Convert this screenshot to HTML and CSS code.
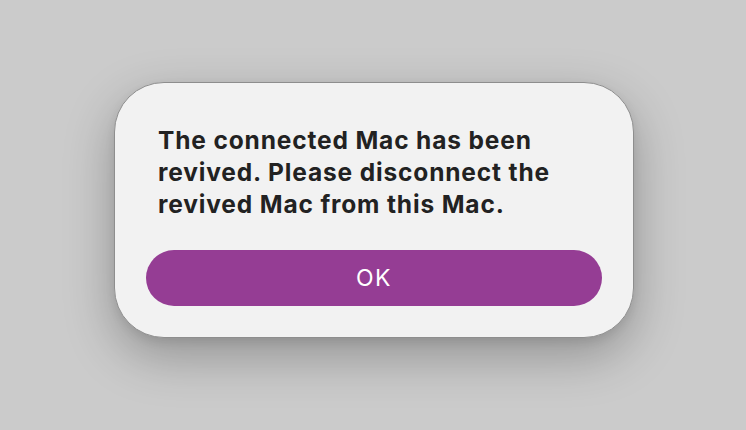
FILE: index.html
```html
<!DOCTYPE html>
<html>
<head>
<meta charset="utf-8">
<link rel="stylesheet" href="styles.css">
</head>
<body>
<div class="stage">
  <div class="dialog">
    <p class="message">The connected Mac has been revived. Please disconnect the revived Mac from this Mac.</p>
    <button class="ok">OK</button>
  </div>
</div>
</body>
</html>
```
FILE: styles.css
```css
html, body {
  margin: 0;
  padding: 0;
  width: 746px;
  height: 430px;
  background: #cbcbcb;
  overflow: hidden;
}
.stage {
  padding: 82px 0 0 114px;
}
.dialog {
  box-sizing: border-box;
  width: 520px;
  height: 256px;
  background: #f2f2f2;
  border: 1px solid #8e8e8e;
  border-radius: 50px;
  box-shadow: 0 18px 50px rgba(0, 0, 0, 0.28), 0 4px 10px rgba(0,0,0,0.08);
  display: flex;
  flex-direction: column;
  padding: 41px 31px 31px 31px;
}
.message {
  margin: 0 0 0 12px;
  font-family: Inter, "Liberation Sans", sans-serif;
  font-weight: 700;
  font-size: 24.5px;
  line-height: 32px;
  letter-spacing: 0.85px;
  color: #222222;
  width: 420px;
}
.ok {
  margin-top: auto;
  height: 56px;
  border: none;
  border-radius: 28px;
  background: #953d94;
  color: #ffffff;
  font-family: Inter, "Liberation Sans", sans-serif;
  font-size: 23px;
  letter-spacing: 1.4px;
  font-weight: 400;
  padding: 0;
}
```
